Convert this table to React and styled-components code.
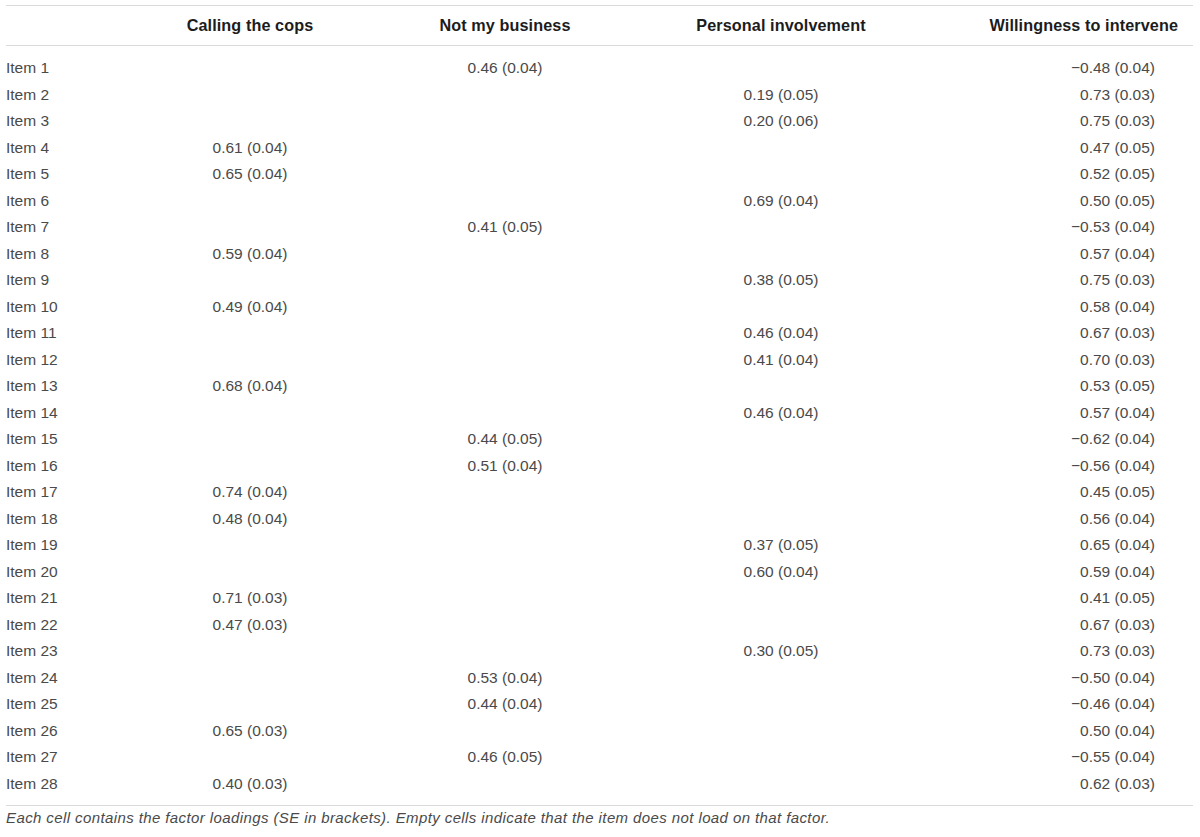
import React from 'react'
import styled, {createGlobalStyle} from 'styled-components'

const GlobalStyle = createGlobalStyle`
  body {
    margin: 0;
    background: #fff;
    font-family: "Liberation Sans", Arial, sans-serif;
  }
`

const Wrapper = styled.div`
  padding: 5px 7px 0 6px;
`

const Table = styled.table`
  width: 100%;
  border-collapse: collapse;
  table-layout: fixed;
  border-top: 1px solid #dadada;
  border-bottom: 1px solid #dadada;
`

const HeadCell = styled.th`
  height: 39px;
  padding: 0;
  padding-right: ${props => props.$right ? '15px' : '0'};
  font-size: 16.2px;
  font-weight: 700;
  letter-spacing: 0.1px;
  color: #1c1c1c;
  text-align: ${props => props.$right ? 'right' : 'center'};
  border-bottom: 1px solid #dadada;
  white-space: nowrap;
`

const Cell = styled.td`
  height: 26.5px;
  padding: 0;
  padding-right: ${props => props.$right ? '38px' : '0'};
  font-size: 15.5px;
  font-weight: 400;
  color: #4a4a4a;
  line-height: 26.5px;
  text-align: ${props => props.$label ? 'left' : props.$right ? 'right' : 'center'};
  white-space: nowrap;
`

const Spacer = styled.td`
  height: ${props => props.$h}px;
  padding: 0;
`

const Note = styled.p`
  margin: 3px 0 0;
  font-size: 15px;
  letter-spacing: 0.4px;
  line-height: 18px;
  font-style: italic;
  color: #4a4a4a;
`

const M = '\u2212'

const rows = [
  ['', '0.46 (0.04)', '', M + '0.48 (0.04)'],
  ['', '', '0.19 (0.05)', '0.73 (0.03)'],
  ['', '', '0.20 (0.06)', '0.75 (0.03)'],
  ['0.61 (0.04)', '', '', '0.47 (0.05)'],
  ['0.65 (0.04)', '', '', '0.52 (0.05)'],
  ['', '', '0.69 (0.04)', '0.50 (0.05)'],
  ['', '0.41 (0.05)', '', M + '0.53 (0.04)'],
  ['0.59 (0.04)', '', '', '0.57 (0.04)'],
  ['', '', '0.38 (0.05)', '0.75 (0.03)'],
  ['0.49 (0.04)', '', '', '0.58 (0.04)'],
  ['', '', '0.46 (0.04)', '0.67 (0.03)'],
  ['', '', '0.41 (0.04)', '0.70 (0.03)'],
  ['0.68 (0.04)', '', '', '0.53 (0.05)'],
  ['', '', '0.46 (0.04)', '0.57 (0.04)'],
  ['', '0.44 (0.05)', '', M + '0.62 (0.04)'],
  ['', '0.51 (0.04)', '', M + '0.56 (0.04)'],
  ['0.74 (0.04)', '', '', '0.45 (0.05)'],
  ['0.48 (0.04)', '', '', '0.56 (0.04)'],
  ['', '', '0.37 (0.05)', '0.65 (0.04)'],
  ['', '', '0.60 (0.04)', '0.59 (0.04)'],
  ['0.71 (0.03)', '', '', '0.41 (0.05)'],
  ['0.47 (0.03)', '', '', '0.67 (0.03)'],
  ['', '', '0.30 (0.05)', '0.73 (0.03)'],
  ['', '0.53 (0.04)', '', M + '0.50 (0.04)'],
  ['', '0.44 (0.04)', '', M + '0.46 (0.04)'],
  ['0.65 (0.03)', '', '', '0.50 (0.04)'],
  ['', '0.46 (0.05)', '', M + '0.55 (0.04)'],
  ['0.40 (0.03)', '', '', '0.62 (0.03)'],
]

export default function App() {
  return (
    <Wrapper>
      <GlobalStyle />
      <Table>
        <colgroup>
          <col style={{width: 124}} />
          <col style={{width: 240}} />
          <col style={{width: 270}} />
          <col style={{width: 282}} />
          <col />
        </colgroup>
        <thead>
          <tr>
            <HeadCell />
            <HeadCell>Calling the cops</HeadCell>
            <HeadCell>Not my business</HeadCell>
            <HeadCell>Personal involvement</HeadCell>
            <HeadCell $right>Willingness to intervene</HeadCell>
          </tr>
        </thead>
        <tbody>
          <tr><Spacer $h={9} colSpan={5} /></tr>
          {rows.map((r, i) => (
            <tr key={i}>
              <Cell $label>Item {i + 1}</Cell>
              <Cell>{r[0]}</Cell>
              <Cell>{r[1]}</Cell>
              <Cell>{r[2]}</Cell>
              <Cell $right>{r[3]}</Cell>
            </tr>
          ))}
          <tr><Spacer $h={8} colSpan={5} /></tr>
        </tbody>
      </Table>
      <Note>Each cell contains the factor loadings (SE in brackets). Empty cells indicate that the item does not load on that factor.</Note>
    </Wrapper>
  )
}
